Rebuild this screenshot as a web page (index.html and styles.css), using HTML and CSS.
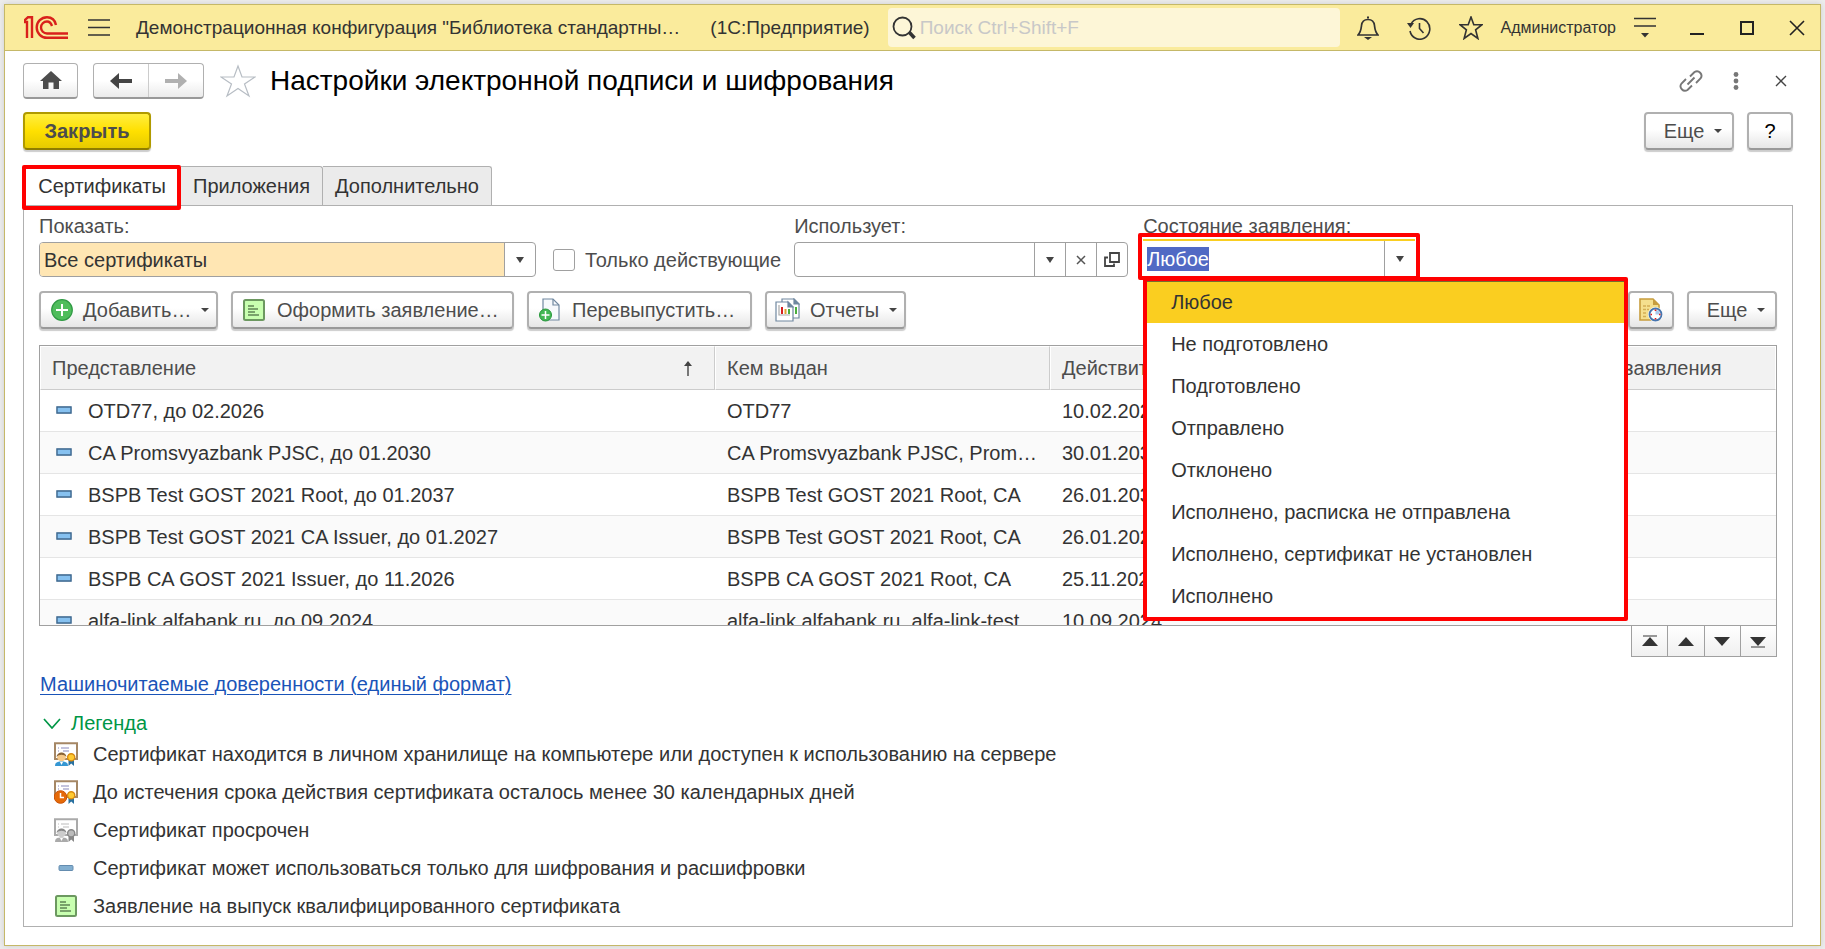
FILE: index.html
```html
<!DOCTYPE html>
<html lang="ru">
<head>
<meta charset="utf-8">
<meta name="viewport" content="width=device-width, initial-scale=1">
<title>Настройки электронной подписи и шифрования</title>
<link rel="stylesheet" href="styles.css">
</head>
<body>
<svg class="sprite" aria-hidden="true">
  <symbol id="arrow" viewBox="0 0 8 6"><path d="M0 0H8L4 6Z" fill="#444"/></symbol>
  <symbol id="caret" viewBox="0 0 8 4"><path d="M0 0H8L4 4Z" fill="#444"/></symbol>
  <symbol id="dash" viewBox="0 0 16 8"><path d="M.5 .5H15.5V7.500H.5Z" fill="#8fb6d6"/><path d="M1 1H15V7H1Z" fill="#86c1f0" stroke="#41698f" stroke-width="1.400"/></symbol>
  <symbol id="form" viewBox="0 0 22 22"><rect x="1" y="1" width="20" height="20" rx="1.500" fill="#c8ffb0" stroke="#6c9860" stroke-width="2"/><path d="M5 7H11M5 10H15M5 13H12M5 16H16" stroke="#5f8554" stroke-width="1.300"/></symbol>
  <symbol id="cert" viewBox="0 0 24 24"><path d="M1 1.200H23V17H1Z" fill="#fff" stroke="var(--frame)" stroke-width="2"/><path d="M4 6H5M7 6H15M4 9H5M9 9H15" stroke="var(--ink)" stroke-width="1.200"/></symbol>
  <symbol id="ribbon" viewBox="0 0 24 24"><path d="M14.500 17H20V24L17.200 21.500 14.500 24Z" fill="var(--tail)"/><circle cx="17.200" cy="15.300" r="3.600" fill="var(--seal)" stroke="var(--ring)" stroke-width="1.400"/></symbol>
  <symbol id="person" viewBox="0 0 24 24"><path d="M1 24C1 20 4 19.500 7.500 19.500S14 20 14 24Z" fill="var(--body)"/><path d="M6 20 7.500 23 9 20Z" fill="#fff"/><circle cx="7.500" cy="15" r="4.300" fill="var(--face)"/><path d="M2.500 15C3 9 12 9 12.500 15C10 12 5 12 2.500 15Z" fill="var(--hair)"/></symbol>
</svg>

<div class="window">
  <header class="titlebar">
    <svg class="logo" width="44" height="23" viewBox="0 0 44 23" role="img" aria-label="1С" fill="none" stroke="#d9211c" stroke-width="2.400"><path d="M0 6H3V22M0 6V5L4 1.200H8V22"/><path d="M32 9C31 4 28 1.200 23 1.200A10.300 10.300 0 0 0 23 21.800H44M28 10C27 7 26 5.500 23 5.500A6 6 0 0 0 23 17.500H44"/></svg>
    <button class="plain hamburger" aria-label="Меню"><svg width="22" height="17" viewBox="0 0 22 17" stroke="#333" stroke-width="1.500"><path d="M0 1H22M0 8.500H22M0 16H22"/></svg></button>
    <span class="app-name">Демонстрационная конфигурация "Библиотека стандартны…</span>
    <span class="app-kind">(1С:Предприятие)</span>
    <label class="search"><svg width="24" height="24" viewBox="0 0 24 24" fill="none" stroke="#333"><circle cx="10.500" cy="10.500" r="9" stroke-width="1.800"/><path d="M17 16L22.500 22" stroke-width="3.500"/></svg><input type="search" placeholder="Поиск Ctrl+Shift+F" aria-label="Поиск"></label>
    <div class="title-tools">
      <button class="plain" aria-label="Уведомления"><svg width="22" height="24" viewBox="0 0 22 24" fill="none" stroke="#333" stroke-width="1.700"><path d="M1 19C4 16 4 14 4.500 9.500C5 5 8 3.500 11 3.500S17 5 17.500 9.500C18 14 18 16 21 19Z"/><path d="M10 1.500H12" stroke-width="2"/><path d="M7 21H15L11 24Z" fill="#333" stroke="none"/></svg></button>
      <button class="plain" aria-label="История"><svg width="24" height="24" viewBox="0 0 24 24" fill="none" stroke="#333" stroke-width="1.600"><path d="M4 8A10 10.300 0 1 1 3 15" /><path d="M12.500 7V12.500L16.500 17"/><path d="M0 7H7L3.500 12Z" fill="#333" stroke="none"/></svg></button>
      <button class="plain" aria-label="Избранное"><svg width="24" height="24" viewBox="0 0 24 24" fill="none" stroke="#333" stroke-width="1.600"><path d="M12 1L14.800 8.700H23L16.600 13.800 18.900 22.500 12 17.500 5.100 22.500 7.400 13.800 1 8.700H9.200Z"/></svg></button>
      <button class="plain user">Администратор</button>
      <button class="plain" aria-label="Настройки"><svg width="22" height="21" viewBox="0 0 22 21" stroke="#333" stroke-width="1.700"><path d="M0 1.500H22M0 9H22"/><path d="M7 16H15L11 20.500Z" fill="#333" stroke="none"/></svg></button>
    </div>
    <div class="window-tools">
      <button class="plain" aria-label="Свернуть"><svg width="16" height="16" viewBox="0 0 16 16"><path d="M1 14H15" stroke="#222" stroke-width="2"/></svg></button>
      <button class="plain" aria-label="Развернуть"><svg width="16" height="16" viewBox="0 0 16 16"><path d="M2 2H14V14H2Z" fill="none" stroke="#222" stroke-width="2"/></svg></button>
      <button class="plain" aria-label="Закрыть окно"><svg width="16" height="16" viewBox="0 0 16 16"><path d="M1 1L15 15M15 1L1 15" stroke="#222" stroke-width="1.600"/></svg></button>
    </div>
  </header>

  <main class="content">
    <div class="page-head">
      <button class="nav-btn" aria-label="Домой"><svg width="22" height="19" viewBox="0 0 22 19" fill="#4d4d4d"><path d="M11 0L22 10H19V18H13.500V11.500H8.500V18H3V10H0Z"/></svg></button>
      <div class="history">
        <button aria-label="Назад"><svg width="22" height="16" viewBox="0 0 22 16" fill="#444"><path d="M0 8L9 0V6H22V10H9V16Z"/></svg></button>
        <button aria-label="Вперед"><svg width="22" height="16" viewBox="0 0 22 16" fill="#b0b0b0"><path d="M22 8L13 0V6H0V10H13V16Z"/></svg></button>
      </div>
      <button class="plain favorite" aria-label="В избранное"><svg width="36" height="34" viewBox="0 0 36 34"><path d="M18 2L22 13H35L24.500 20 29 32 18 24.500 7 32 11.500 20 1 13H14Z" fill="none" stroke="#b7bdc4" stroke-width="1.200"/></svg></button>
      <h1>Настройки электронной подписи и шифрования</h1>
      <div class="page-tools">
        <button class="plain" aria-label="Ссылка"><svg width="24" height="24" viewBox="0 0 24 24" fill="none" stroke="#777" stroke-width="1.900"><path d="M11 7.500L15.500 3A4.500 4.500 0 0 1 21.500 9.500L17 14M13 16.500L8.500 21A4.500 4.500 0 0 1 2.500 14.500L7 10M8.500 15.500L15.500 8.500"/></svg></button>
        <button class="plain" aria-label="Дополнительные действия"><svg width="24" height="18" viewBox="0 0 24 18" fill="#777"><circle cx="12" cy="2.500" r="2.400"/><circle cx="12" cy="9" r="2.400"/><circle cx="12" cy="15.500" r="2.400"/></svg></button>
        <button class="plain" aria-label="Закрыть страницу"><svg width="24" height="12" viewBox="0 0 24 12"><path d="M7 1L17 11M17 1L7 11" stroke="#444" stroke-width="1.400"/></svg></button>
      </div>
    </div>

    <div class="commands">
      <button class="btn primary">Закрыть</button>
      <span class="spacer"></span>
      <button class="btn more">Еще<svg class="caret"><use href="#caret"/></svg></button>
      <button class="btn help">?</button>
    </div>

    <div class="tabs" role="tablist">
      <button class="tab active" role="tab" aria-selected="true">Сертификаты</button>
      <button class="tab" role="tab" aria-selected="false">Приложения</button>
      <button class="tab" role="tab" aria-selected="false">Дополнительно</button>
    </div>

    <section class="panel">
      <div class="filters">
        <div class="field show">
          <label for="show">Показать:</label>
          <div class="combo">
            <select id="show"><option>Все сертификаты</option></select>
            <span class="combo-arrow"><svg class="arrow"><use href="#arrow"/></svg></span>
          </div>
        </div>
        <label class="check"><input type="checkbox"><span>Только действующие</span></label>
        <div class="field uses">
          <label for="uses">Использует:</label>
          <div class="combo">
            <input id="uses" type="text">
            <button aria-label="Выбрать"><svg class="arrow"><use href="#arrow"/></svg></button>
            <button aria-label="Очистить"><svg width="10" height="10" viewBox="0 0 10 10"><path d="M1 1L9 9M9 1L1 9" stroke="#555" stroke-width="1.500"/></svg></button>
            <button aria-label="Открыть"><svg width="16" height="16" viewBox="0 0 16 16" fill="none" stroke="#444" stroke-width="1.800"><path d="M6 1H15V10H6ZM4 5.500H1V14H10V11.500"/></svg></button>
          </div>
        </div>
        <div class="field state">
          <label for="state">Состояние заявления:</label>
          <div class="combo open">
            <input id="state" type="text" role="combobox" aria-expanded="true" aria-controls="state-list" value="Любое">
            <button aria-label="Выбрать состояние"><svg class="arrow"><use href="#arrow"/></svg></button>
          </div>
          <ul class="dropdown" id="state-list" role="listbox">
            <li class="selected" role="option" aria-selected="true">Любое</li>
            <li role="option">Не подготовлено</li>
            <li role="option">Подготовлено</li>
            <li role="option">Отправлено</li>
            <li role="option">Отклонено</li>
            <li role="option">Исполнено, расписка не отправлена</li>
            <li role="option">Исполнено, сертификат не установлен</li>
            <li role="option">Исполнено</li>
          </ul>
        </div>
      </div>

      <div class="toolbar">
        <button class="btn add"><svg width="22" height="22" viewBox="0 0 22 22"><circle cx="11" cy="11" r="10.300" fill="#4fbd5c" stroke="#2f9a43" stroke-width="1.200"/><path d="M11 5V17M5 11H17" stroke="#fff" stroke-width="2"/></svg>Добавить…<svg class="caret"><use href="#caret"/></svg></button>
        <button class="btn apply"><svg width="22" height="22"><use href="#form"/></svg>Оформить заявление…</button>
        <button class="btn reissue"><svg width="21" height="24" viewBox="0 0 21 24"><path d="M4 1H14L20 7V22H4Z" fill="#f6f9fc" stroke="#7088a0" stroke-width="1.200"/><path d="M14 1V7H20" fill="none" stroke="#7088a0" stroke-width="1.200"/><circle cx="6.500" cy="17" r="6" fill="#43b854" stroke="#249638"/><path d="M6.500 13V21M2.500 17H10.500" stroke="#fff" stroke-width="1.500"/></svg>Перевыпустить…</button>
        <button class="btn reports"><svg width="25" height="24" viewBox="0 0 25 24" fill="#fff" stroke="#7088a0" stroke-width="1.200"><path d="M7 1H19L24 6V20H7Z"/><path d="M19 1V6H24Z" fill="#7088a0"/><path d="M21 9V16" stroke="#4aaf3c" stroke-width="2"/><path d="M1 4H13L18 9V23H1Z"/><path d="M13 4V9H18Z" fill="#7088a0"/><path d="M4 7V17H15" fill="none" stroke="#aaa"/><path d="M7 9V16" stroke="#d82020" stroke-width="2"/><path d="M10.500 11V16" stroke="#e0a030" stroke-width="2"/><path d="M14 11V16" stroke="#4aaf3c" stroke-width="2"/></svg>Отчеты<svg class="caret"><use href="#caret"/></svg></button>
        <span class="spacer"></span>
        <button class="btn journal" aria-label="Журнал"><svg width="24" height="24" viewBox="0 0 24 24"><path d="M1 1H14L20 7V22H1Z" fill="#f5df8e" stroke="#c79d3e" stroke-width="1.600"/><path d="M14 1V7H20Z" fill="#c79d3e"/><path d="M4 8H12M4 11.500H10M4 15H8M4 18.500H8" stroke="#d3ae55" stroke-width="1.300" stroke-dasharray="3 1"/><circle cx="16.500" cy="16.500" r="7.400" fill="#fff"/><circle cx="16.500" cy="16.500" r="6" fill="#fff" stroke="#4775ae" stroke-width="1.800"/><path d="M16.500 12V16.500H21A4.500 4.500 0 0 0 16.500 12" fill="#a9c8ee"/><path d="M16.500 11.500V13M16.500 20V21.500M11.500 16.500H13M20 16.500H21.500" stroke="#e01818" stroke-width="1.600"/></svg></button>
        <button class="btn more">Еще<svg class="caret"><use href="#caret"/></svg></button>
      </div>

      <div class="grid">
        <table>
          <colgroup><col class="c-name"><col class="c-issuer"><col class="c-until"><col></colgroup>
          <thead><tr><th><div class="sorted">Представление<svg width="8" height="15" viewBox="0 0 8 15"><path d="M4 1V15" stroke="#444" stroke-width="1.400"/><path d="M0 5L4 0L8 5Z" fill="#444"/></svg></div></th><th>Кем выдан</th><th>Действителен до</th><th>Состояние заявления</th></tr></thead>
          <tbody>
            <tr><td><svg class="dash"><use href="#dash"/></svg>OTD77, до 02.2026</td><td>OTD77</td><td>10.02.2026</td><td></td></tr>
            <tr><td><svg class="dash"><use href="#dash"/></svg>CA Promsvyazbank PJSC, до 01.2030</td><td>CA Promsvyazbank PJSC, Prom…</td><td>30.01.2030</td><td></td></tr>
            <tr><td><svg class="dash"><use href="#dash"/></svg>BSPB Test GOST 2021 Root, до 01.2037</td><td>BSPB Test GOST 2021 Root, CA</td><td>26.01.2037</td><td></td></tr>
            <tr><td><svg class="dash"><use href="#dash"/></svg>BSPB Test GOST 2021 CA Issuer, до 01.2027</td><td>BSPB Test GOST 2021 Root, CA</td><td>26.01.2027</td><td></td></tr>
            <tr><td><svg class="dash"><use href="#dash"/></svg>BSPB CA GOST 2021 Issuer, до 11.2026</td><td>BSPB CA GOST 2021 Root, CA</td><td>25.11.2026</td><td></td></tr>
            <tr><td><svg class="dash"><use href="#dash"/></svg>alfa-link.alfabank.ru, до 09.2024</td><td>alfa-link.alfabank.ru, alfa-link-test</td><td>10.09.2024</td><td></td></tr>
          </tbody>
        </table>
      </div>
      <div class="pager">
        <button aria-label="В начало"><svg width="16" height="13" viewBox="0 0 16 13"><path d="M1 1H15" stroke="#777" stroke-width="1.500"/><path d="M0 11L8 2L16 11Z" fill="#333"/></svg></button>
        <button aria-label="Вверх"><svg width="16" height="13" viewBox="0 0 16 13"><path d="M0 11L8 2L16 11Z" fill="#333"/></svg></button>
        <button aria-label="Вниз"><svg width="16" height="13" viewBox="0 0 16 13"><path d="M0 2L8 11L16 2Z" fill="#333"/></svg></button>
        <button aria-label="В конец"><svg width="16" height="13" viewBox="0 0 16 13"><path d="M1 12H15" stroke="#777" stroke-width="1.500"/><path d="M0 2L8 11L16 2Z" fill="#333"/></svg></button>
      </div>

      <a class="doc-link" href="#">Машиночитаемые доверенности (единый формат)</a>

      <button class="plain legend-toggle" aria-expanded="true"><svg width="18" height="11" viewBox="0 0 18 11"><path d="M1 1L9 10L17 1" fill="none" stroke="#009646" stroke-width="1.700"/></svg>Легенда</button>
      <ul class="legend">
        <li><svg class="valid" width="24" height="24"><use href="#cert"/><use href="#person"/><use href="#ribbon"/></svg>Сертификат находится в личном хранилище на компьютере или доступен к использованию на сервере</li>
        <li><svg class="valid" width="24" height="24"><use href="#cert"/><circle cx="6.500" cy="17" r="6.300" fill="#e56a08" stroke="#c9540a"/><path d="M6.500 13V17.500H10" fill="none" stroke="#fff" stroke-width="1.500"/><use href="#ribbon"/></svg>До истечения срока действия сертификата осталось менее 30 календарных дней</li>
        <li><svg class="expired" width="24" height="24"><use href="#cert"/><use href="#person"/><use href="#ribbon"/></svg>Сертификат просрочен</li>
        <li><svg width="24" height="24" viewBox="0 0 24 24"><rect x="5" y="9.500" width="14" height="5" rx="1" fill="#83afd0" stroke="#648caf"/></svg>Сертификат может использоваться только для шифрования и расшифровки</li>
        <li><svg width="24" height="24" viewBox="-1 -1 24 24"><use href="#form" width="22" height="22"/></svg>Заявление на выпуск квалифицированного сертификата</li>
      </ul>
    </section>
  </main>
</div>
<script src="main.js"></script>
</body>
</html>
```
FILE: main.js
```js
const state = document.getElementById('state');
state.focus();
state.select();
```
FILE: styles.css
```css
* { box-sizing: border-box; }
body {
  margin: 0;
  padding: 4px;
  background: #ededed;
  color: #333;
  font: 20px/24px "Liberation Sans", Arial, sans-serif;
}
button, input, select { font: inherit; color: inherit; }
button { cursor: pointer; }
ul { list-style: none; margin: 0; padding: 0; }
svg { flex: none; }
.sprite { position: absolute; width: 0; height: 0; }
.plain {
  display: flex;
  align-items: center;
  padding: 0;
  border: 0;
  background: none;
}
.spacer { flex: 1; }
.caret { width: 8px; height: 4px; }
.arrow { width: 8px; height: 6px; }

.window {
  min-height: calc(100vh - 8px);
  border: 1px solid #c5b868;
  background: #fff;
  box-shadow: 0 0 6px #ccc;
}

/* Title bar */
.titlebar {
  display: flex;
  align-items: center;
  height: 46px;
  padding: 0 15px 0 19px;
  border-bottom: 1px solid #c5b868;
  background: #faeb9c;
  font-size: 19px;
}
.hamburger { margin: 0 26px 0 20px; }
.app-name { flex: none; white-space: nowrap; }
.app-kind { flex: none; margin: 0 18px 0 30px; white-space: nowrap; }
.search {
  display: flex;
  flex: 1;
  align-items: center;
  gap: 4px;
  height: 39px;
  padding-left: 4px;
  border-radius: 4px;
  background: #fdf6d7;
}
.search input {
  flex: 1;
  min-width: 0;
  padding: 0;
  border: 0;
  outline: 0;
  background: none;
}
.search input::placeholder { color: #c8c8c8; opacity: 1; }
.title-tools { display: flex; align-items: center; gap: 28px; margin-left: 17px; }
.user { margin: 0 -10px; font-size: 16px; }
.window-tools { display: flex; align-items: center; gap: 34px; margin-left: 33px; }

/* Page header */
.content { padding: 12px 27px 18px 18px; }
.page-head { display: flex; align-items: center; height: 36px; }
.nav-btn, .history {
  display: flex;
  align-items: center;
  justify-content: center;
  height: 36px;
  border: 1px solid #b0b0b0;
  border-bottom: 2px solid #999;
  border-radius: 4px;
  background: linear-gradient(#fff 50%, #ebebeb);
}
.nav-btn { width: 55px; padding: 0; }
.history { width: 111px; margin-left: 15px; }
.history button {
  display: flex;
  flex: 1;
  align-items: center;
  justify-content: center;
  height: 100%;
  padding: 0;
  border: 0;
  background: none;
}
.history button + button { border-left: 1px solid #ccc; }
.favorite { margin: 0 14px 0 16px; }
h1 { margin: 0; color: #000; font-size: 28px; font-weight: 400; line-height: 36px; white-space: nowrap; }
.page-tools { display: flex; align-items: center; gap: 21px; margin-left: auto; }

/* Buttons */
.btn {
  display: flex;
  align-items: center;
  justify-content: center;
  height: 38px;
  padding: 0 10px;
  border: 2px solid #b0b0b0;
  border-bottom-color: #999;
  border-radius: 4px;
  background: linear-gradient(#fff 45%, #e6e6e6);
  box-shadow: 0 2px 1px #ccc;
  color: #4d4d4d;
  white-space: nowrap;
}
.commands { display: flex; gap: 13px; margin-top: 13px; }
.primary {
  width: 128px;
  border-color: #b09a00;
  border-bottom-color: #8f7d00;
  background: linear-gradient(#ffee40, #ffe000 50%, #e6cb00);
  font-weight: 700;
}
.more { width: 90px; gap: 10px; padding: 0 6px 0 14px; }
.help { width: 46px; color: #000; }

/* Tabs */
.tabs { display: flex; height: 39px; margin-top: 16px; }
.tab {
  padding: 0 12px;
  border: 1px solid #b0b0b0;
  border-width: 1px 1px 0 0;
  border-radius: 0 3px 0 0;
  background: #ebebeb;
}
.tab.active {
  position: relative;
  width: 158px;
  border: 0;
  background: #fff;
}
.tab.active::after {
  content: "";
  position: absolute;
  inset: -1px 0 -5px -1px;
  border: 4px solid #f00;
  border-radius: 2px;
}
.panel { padding: 8px 15px 1px; border: 1px solid #b0b0b0; }

/* Filters */
.filters { display: flex; align-items: flex-end; }
.field label { display: block; margin-bottom: 4px; color: #4d4d4d; }
.combo {
  position: relative;
  display: flex;
  height: 35px;
  border: 1px solid #a0a0a0;
  border-radius: 4px;
  background: #fff;
}
.combo input, .combo select {
  flex: 1;
  width: 100%;
  min-width: 0;
  padding: 0 4px;
  border: 0;
  border-radius: 3px 0 0 3px;
  outline: 0;
  background: none;
  appearance: none;
}
.combo select { background: #ffe6b3; }
.combo button, .combo-arrow {
  display: flex;
  flex: none;
  align-items: center;
  justify-content: center;
  width: 31px;
  padding: 0;
  border: 0;
  border-left: 1px solid #a0a0a0;
  background: none;
}
.show { width: 497px; }
.check {
  display: flex;
  align-items: center;
  gap: 10px;
  height: 35px;
  margin: 0 13px 0 17px;
  color: #4d4d4d;
  white-space: nowrap;
}
.check input {
  width: 22px;
  height: 22px;
  margin: 0;
  border: 1px solid #a0a0a0;
  border-radius: 3px;
  appearance: none;
}
.uses { width: 334px; margin-right: 15px; }
.state { position: relative; width: 272px; }
.state label { margin-bottom: 1px; }
.combo.open { height: 38px; border: 0; border-top: 2px solid #face20; border-radius: 0; }
.combo.open::after {
  content: "";
  position: absolute;
  inset: -8px -5px -3px -5px;
  border: 4px solid #f00;
  border-radius: 2px;
  pointer-events: none;
}
#state::selection { background: #5169c4; color: #fff; }
.dropdown {
  position: absolute;
  z-index: 2;
  top: 100%;
  left: 0;
  width: 485px;
  border: 4px solid #f00;
  border-radius: 2px;
  background: #fff;
}
.dropdown li { height: 42px; padding-left: 24px; line-height: 42px; }
.dropdown .selected { background: #face20; box-shadow: inset 0 1px #776a30; }

/* Toolbar */
.toolbar { display: flex; margin-top: 14px; }
.toolbar .btn { margin-right: 13px; justify-content: flex-start; gap: 10px; }
.toolbar .add { width: 179px; }
.toolbar .apply { width: 283px; gap: 12px; }
.toolbar .reissue { width: 225px; gap: 12px; }
.toolbar .reports { width: 141px; padding: 0 8px; }
.toolbar .journal { width: 46px; padding: 0 9px; }
.toolbar .more { width: 90px; margin-right: 0; justify-content: center; }

/* Certificates list */
.grid {
  height: 281px;
  margin-top: 16px;
  overflow: hidden;
  border: 1px solid #a0a0a0;
}
table { width: 100%; border-collapse: separate; border-spacing: 0; table-layout: fixed; }
.c-name { width: 675px; }
.c-issuer { width: 335px; }
.c-until { width: 457px; }
th {
  height: 44px;
  padding: 0 12px 0 11px;
  border: 1px solid #fff;
  border-right-color: #ccc;
  border-bottom-color: #ccc;
  background: #f2f2f2;
  color: #4d4d4d;
  font-weight: 400;
  text-align: left;
}
th:last-child { border-right-color: #fff; }
.sorted { display: flex; align-items: center; justify-content: space-between; padding-right: 10px; }
td {
  height: 42px;
  padding: 0 12px;
  border-bottom: 1px solid #e5e5e5;
  white-space: nowrap;
}
td:first-child { padding-left: 16px; }
tr:nth-child(even) td { background: #fafafa; }
.dash { width: 16px; height: 8px; margin-right: 16px; vertical-align: 4px; }
.pager {
  display: flex;
  width: 146px;
  margin-left: auto;
  border: 1px solid #a0a0a0;
  border-top: 0;
}
.pager button {
  display: flex;
  flex: 1;
  align-items: center;
  justify-content: center;
  height: 30px;
  padding: 0;
  border: 0;
  background: linear-gradient(#fff, #f0f0f0);
}
.pager button + button { border-left: 1px solid #a0a0a0; }

/* Link and legend */
.doc-link { display: table; margin: 15px 0 0 1px; color: #1a54b8; text-underline-offset: 3px; text-decoration-thickness: 1px; }
.legend-toggle { gap: 10px; height: 24px; margin: 15px 0 0 4px; color: #009646; }
.legend li { display: flex; align-items: center; gap: 15px; height: 38px; padding-left: 15px; }
.valid { --frame: #a58765; --ink: #8888bb; --tail: #28709f; --seal: #ffca30; --ring: #d98a10; --body: #3597d3; --face: #f6c887; --hair: #8a6438; }
.expired { --frame: #aaa; --ink: #bbb; --tail: #888; --seal: #bbb; --ring: #888; --body: #aaa; --face: #ccc; --hair: #888; }
```
